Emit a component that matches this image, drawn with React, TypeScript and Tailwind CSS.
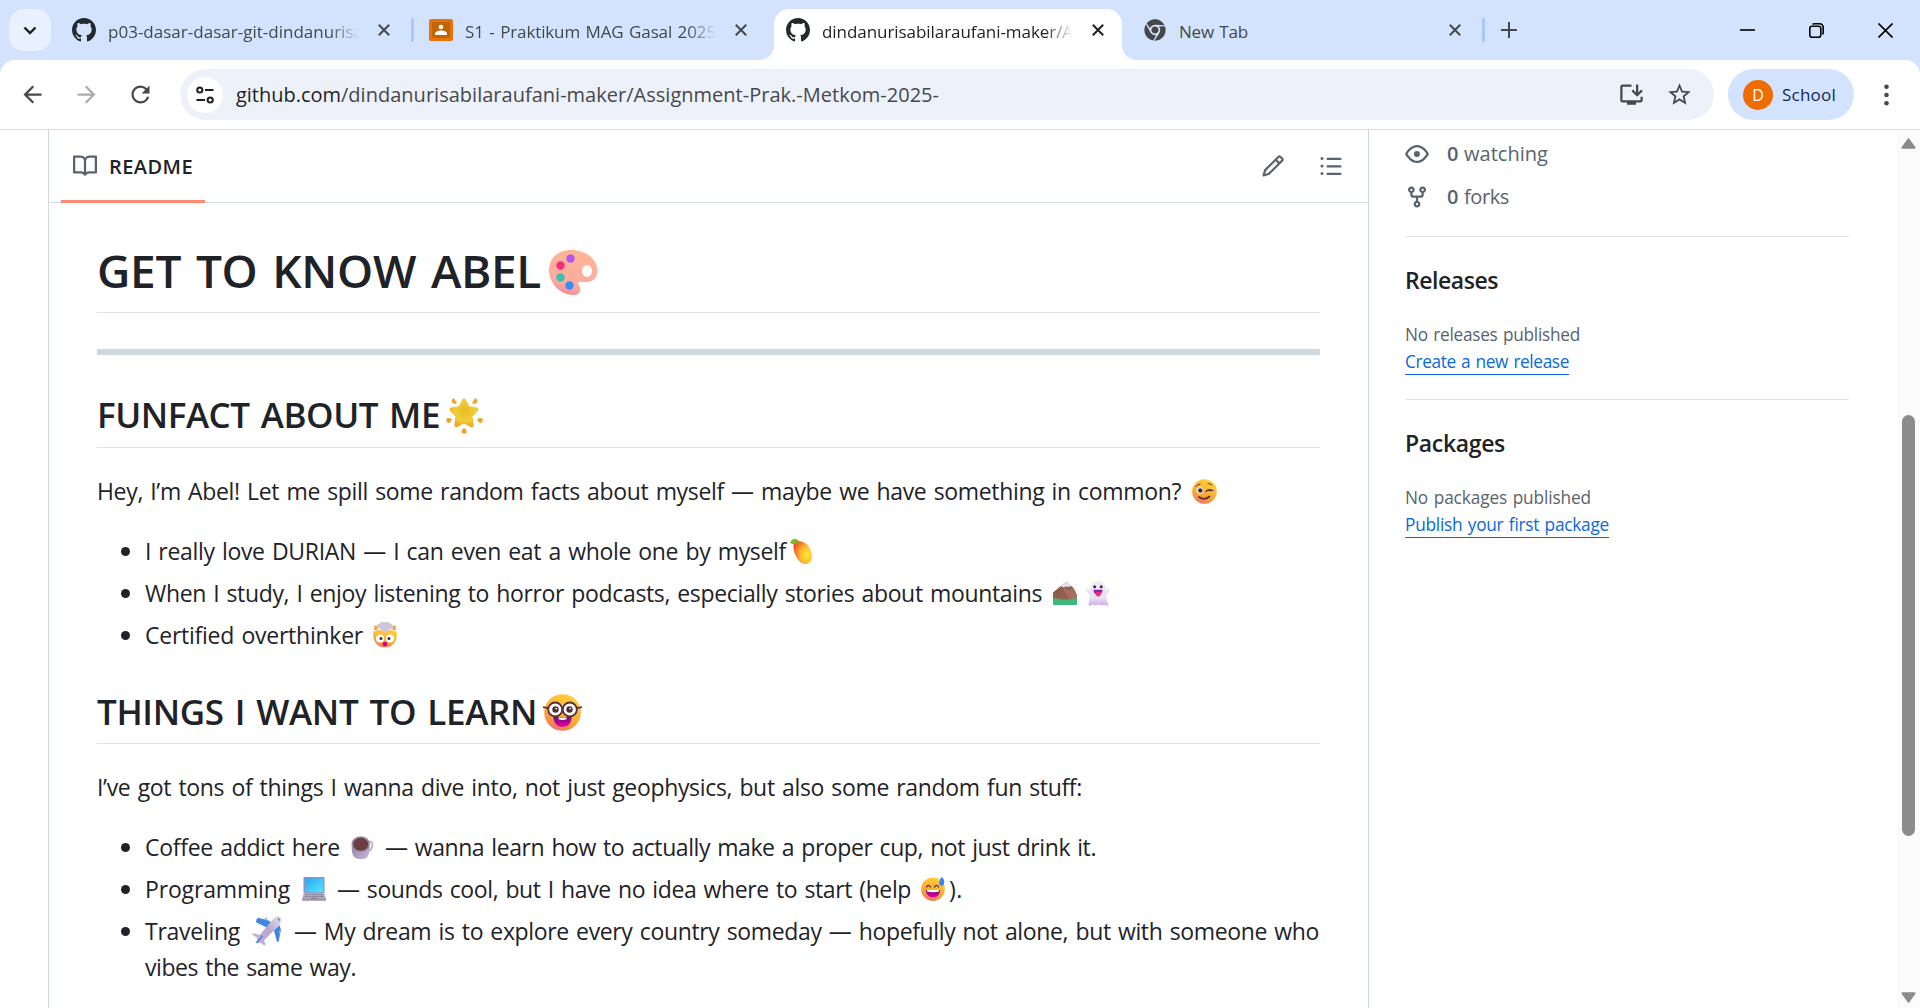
import React, { useLayoutEffect, useRef, useState } from "react";
import { FaChrome } from "react-icons/fa";
import { MdArrowBack, MdArrowForward, MdInstallDesktop, MdRefresh, MdStarBorder } from "react-icons/md";

/* One line of text whose tracking is adjusted so that it spans exactly `w` pixels. */
function Fit({ w, className = "", children }: { w: number; className?: string; children: React.ReactNode }) {
  const ref = useRef<HTMLSpanElement>(null);
  const [spacing, setSpacing] = useState(0);
  useLayoutEffect(() => {
    const el = ref.current;
    if (!el) return;
    el.style.letterSpacing = "0px";
    const n = (el.textContent || "").length;
    const s = (w - el.getBoundingClientRect().width) / n;
    el.style.letterSpacing = s + "px";
    setSpacing(s);
  }, [w]);
  return (
    <span ref={ref} className={"inline-block shrink-0 whitespace-pre [word-spacing:0.07em] " + className} style={{ letterSpacing: spacing }}>
      {children}
    </span>
  );
}

function Octicon({ d, className = "" }: { d: string; className?: string }) {
  return (
    <svg viewBox="0 0 16 16" className={"size-6 shrink-0 fill-current " + className}>
      <path fillRule="evenodd" d={d} />
    </svg>
  );
}

const MARK =
  "M8 0c4.42 0 8 3.58 8 8a8.013 8.013 0 0 1-5.45 7.59c-.4.08-.55-.17-.55-.38 0-.27.01-1.13.01-2.2 0-.75-.25-1.23-.54-1.48 1.78-.2 3.65-.88 3.65-3.95 0-.88-.31-1.59-.82-2.15.08-.2.36-1.02-.08-2.12 0 0-.67-.22-2.2.82-.64-.18-1.32-.27-2-.27-.68 0-1.36.09-2 .27-1.53-1.03-2.2-.82-2.2-.82-.44 1.1-.16 1.92-.08 2.12-.51.56-.82 1.28-.82 2.15 0 3.06 1.86 3.75 3.64 3.95-.23.2-.44.55-.51 1.07-.46.21-1.61.55-2.33-.66-.15-.24-.6-.83-1.23-.82-.67.01-.27.38.01.53.34.19.73.9.82 1.13.16.45.68 1.31 2.69.94 0 .67.01 1.3.01 1.49 0 .21-.15.45-.55.38A7.995 7.995 0 0 1 0 8c0-4.42 3.58-8 8-8Z";
const BOOK =
  "M0 1.75A.75.75 0 0 1 .75 1h4.253c1.227 0 2.317.59 3 1.501A3.743 3.743 0 0 1 11.006 1h4.245a.75.75 0 0 1 .75.75v10.5a.75.75 0 0 1-.75.75h-4.507a2.25 2.25 0 0 0-1.591.659l-.622.621a.75.75 0 0 1-1.06 0l-.622-.621A2.25 2.25 0 0 0 5.258 13H.75a.75.75 0 0 1-.75-.75Zm7.251 10.324.004-5.073-.002-2.253A2.25 2.25 0 0 0 5.003 2.5H1.5v9h3.757a3.75 3.75 0 0 1 1.994.574ZM8.755 4.75l-.004 7.322a3.752 3.752 0 0 1 1.992-.572H14.5v-9h-3.495a2.25 2.25 0 0 0-2.25 2.25Z";
const PENCIL =
  "M11.013 1.427a1.75 1.75 0 0 1 2.474 0l1.086 1.086a1.75 1.75 0 0 1 0 2.474l-8.61 8.61c-.21.21-.47.364-.756.445l-3.251.93a.75.75 0 0 1-.927-.928l.929-3.25c.081-.286.235-.547.445-.758l8.61-8.61Zm.176 4.823L9.75 4.81l-6.286 6.287a.253.253 0 0 0-.064.108l-.558 1.953 1.953-.558a.253.253 0 0 0 .108-.064Zm1.238-3.763a.25.25 0 0 0-.354 0L10.811 3.75l1.439 1.44 1.263-1.263a.25.25 0 0 0 0-.354Z";
const LIST =
  "M5.75 2.5h8.5a.75.75 0 0 1 0 1.5h-8.5a.75.75 0 0 1 0-1.5Zm0 5h8.5a.75.75 0 0 1 0 1.5h-8.5a.75.75 0 0 1 0-1.5Zm0 5h8.5a.75.75 0 0 1 0 1.5h-8.5a.75.75 0 0 1 0-1.5ZM2 14a1 1 0 1 1 0-2 1 1 0 0 1 0 2Zm1-6a1 1 0 1 1-2 0 1 1 0 0 1 2 0ZM2 4a1 1 0 1 1 0-2 1 1 0 0 1 0 2Z";
const EYE =
  "M8 2c1.981 0 3.671.992 4.933 2.078 1.27 1.091 2.187 2.345 2.637 3.023a1.62 1.62 0 0 1 0 1.798c-.45.678-1.367 1.932-2.637 3.023C11.67 13.008 9.981 14 8 14c-1.981 0-3.671-.992-4.933-2.078C1.797 10.83.88 9.576.43 8.898a1.62 1.62 0 0 1 0-1.798c.45-.677 1.367-1.931 2.637-3.022C4.33 2.992 6.019 2 8 2ZM1.679 7.932a.12.12 0 0 0 0 .136c.411.622 1.241 1.75 2.366 2.717C5.176 11.758 6.527 12.5 8 12.5c1.473 0 2.825-.742 3.955-1.715 1.124-.967 1.954-2.096 2.366-2.717a.12.12 0 0 0 0-.136c-.412-.621-1.242-1.75-2.366-2.717C10.824 4.242 9.473 3.5 8 3.5c-1.473 0-2.825.742-3.955 1.715-1.124.967-1.954 2.096-2.366 2.717ZM8 10a2 2 0 1 1-.001-3.999A2 2 0 0 1 8 10Z";
const FORK =
  "M5 5.372v.878c0 .414.336.75.75.75h4.5a.75.75 0 0 0 .75-.75v-.878a2.25 2.25 0 1 1 1.5 0v.878a2.25 2.25 0 0 1-2.25 2.25h-1.5v2.128a2.251 2.251 0 1 1-1.5 0V8.5h-1.5A2.25 2.25 0 0 1 3.5 6.25v-.878a2.25 2.25 0 1 1 1.5 0ZM5 3.25a.75.75 0 1 0-1.5 0 .75.75 0 0 0 1.5 0Zm6.75.75a.75.75 0 1 0 0-1.5.75.75 0 0 0 0 1.5Zm-3 8.75a.75.75 0 1 0-1.5 0 .75.75 0 0 0 1.5 0Z";

function Cross({ className = "" }: { className?: string }) {
  return (
    <svg viewBox="0 0 12 12" className={"size-3 shrink-0 fill-none stroke-current stroke-2 " + className}>
      <path d="M.8.8l10.4 10.4M11.2.8L.8 11.2" />
    </svg>
  );
}

/* ---------- emoji drawings ---------- */

function Gradients() {
  return (
    <svg className="absolute size-0">
      <defs>
        <linearGradient id="face" x1="0.7" y1="0" x2="0.3" y2="1">
          <stop offset="0" stopColor="#ffd03c" />
          <stop offset="0.6" stopColor="#fbab33" />
          <stop offset="0.85" stopColor="#f58a4e" />
          <stop offset="1" stopColor="#ee6a8c" />
        </linearGradient>
        <linearGradient id="mouth" x1="0" y1="0" x2="0" y2="1">
          <stop offset="0" stopColor="#6d0b8a" />
          <stop offset="0.6" stopColor="#c3008f" />
          <stop offset="1" stopColor="#e010a8" />
        </linearGradient>
        <linearGradient id="pal" x1="0.7" y1="0" x2="0.4" y2="1">
          <stop offset="0" stopColor="#ffb696" />
          <stop offset="0.8" stopColor="#fbaaa0" />
          <stop offset="1" stopColor="#f08c9c" />
        </linearGradient>
        <radialGradient id="star" cx="0.55" cy="0.4" r="0.7">
          <stop offset="0" stopColor="#e6bd20" />
          <stop offset="0.6" stopColor="#f3cd37" />
          <stop offset="1" stopColor="#e9a92a" />
        </radialGradient>
        <radialGradient id="mango" cx="0.75" cy="0.6" r="0.75">
          <stop offset="0" stopColor="#ffe83b" />
          <stop offset="0.5" stopColor="#fdb92f" />
          <stop offset="1" stopColor="#ee5a24" />
        </radialGradient>
        <linearGradient id="ghost" x1="0" y1="0" x2="0" y2="1">
          <stop offset="0" stopColor="#f1ecf5" />
          <stop offset="0.7" stopColor="#e9e0f2" />
          <stop offset="1" stopColor="#cfa8ee" />
        </linearGradient>
        <linearGradient id="screen" x1="0" y1="0" x2="1" y2="1">
          <stop offset="0" stopColor="#2aa6f0" />
          <stop offset="1" stopColor="#55e6ff" />
        </linearGradient>
        <linearGradient id="cup" x1="0" y1="0" x2="1" y2="1">
          <stop offset="0" stopColor="#8a7f9c" />
          <stop offset="1" stopColor="#cdb8e2" />
        </linearGradient>
        <linearGradient id="plane" x1="1" y1="0" x2="0" y2="1">
          <stop offset="0" stopColor="#e9e2ee" />
          <stop offset="0.5" stopColor="#b9a9c9" />
          <stop offset="1" stopColor="#c9addd" />
        </linearGradient>
        <linearGradient id="rock" x1="0" y1="0" x2="1" y2="1">
          <stop offset="0" stopColor="#86574a" />
          <stop offset="1" stopColor="#9a6654" />
        </linearGradient>
      </defs>
    </svg>
  );
}

const Palette = () => (
  <svg viewBox="0 0 49 45" className="mt-[10px] ml-2 h-[45px] w-[49px] shrink-0">
    <path
      fill="url(#pal)"
      fillRule="evenodd"
      d="M22 0C38 0 48.500 10 48.500 21c0 7-5 11-11 11-4 0-8-1-8.500 1-.3 1.500 2.500 3 2.500 6.500 0 3.500-3 5.500-7 5.500C11 45 0 33 0 20 0 8 9 0 22 0Zm16 15a5 6 0 1 0 0 12 5 6 0 0 0 0-12Z"
    />
    <circle cx="21.500" cy="8.500" r="4.200" fill="#b455f0" />
    <circle cx="11.500" cy="15.500" r="4.200" fill="#f0307f" />
    <circle cx="11.500" cy="27.500" r="4.200" fill="#3bbfae" />
    <circle cx="20.500" cy="35.500" r="4.200" fill="#3a8df2" />
  </svg>
);

const GlowStar = () => (
  <svg viewBox="0 0 37 37" className="mt-[6px] ml-1.5 size-[37px] shrink-0">
    <path
      fill="url(#star)"
      stroke="url(#star)"
      strokeWidth="4"
      strokeLinejoin="round"
      d="M18 3.500l3.800 7.400 8.700 1.500-6 6.600 1.200 9.200-7.700-3.800-7.700 3.800 1.200-9.200-6-6.600 8.700-1.500z"
    />
    <path
      fill="#eaa62c"
      d="M6 2.500c1-1.500 2.500-1 3 .3l2 3.700c-2 .8-5 .2-5-1.500zM31 2.500c-1-1.500-2.500-1-3 .3l-2 3.700c2 .8 5 .2 5-1.500zM.5 21.500c1.500-1.200 3.500-.5 5.500.7-.8 2-2.500 4.500-4 3.800C.7 25.500-.2 22.500.5 21.500zM36.500 21.500c-1.500-1.200-3.500-.5-5.500.7.8 2 2.500 4.500 4 3.800 1.300-.5 2.200-3.500 1.500-4.500zM18 31c1.500.3 3 3 2.700 4.500-.3 1.600-4.700 1.600-5.200 0C15.200 34 16.500 31.200 18 31z"
    />
  </svg>
);

const Nerd = () => (
  <svg viewBox="0 0 39 37" className="mt-[5px] ml-1.5 h-[37px] w-[39px] shrink-0">
    <circle cx="19.500" cy="18.500" r="18.300" fill="url(#face)" />
    <path d="M10.500 23h18c0 6-3.500 10-9 10s-9-4-9-10z" fill="url(#mouth)" />
    <path d="M15.500 23.500h8v1.800q-4 1.500-8 0z" fill="#fff" />
    <g fill="#fff" stroke="#55303c" strokeWidth="1.800">
      <circle cx="12.200" cy="15.500" r="7" />
      <circle cx="26.800" cy="15.500" r="7" />
      <path d="M18.500 14.500q1-1 2 0M0 13.200l5.200.9M39 13.200l-5.200.9" />
    </g>
    <circle cx="12.500" cy="15.500" r="3.200" fill="#48303a" />
    <circle cx="26.500" cy="15.500" r="3.200" fill="#48303a" />
    <circle cx="13.200" cy="14.600" r=".9" fill="#fff" />
    <circle cx="27.200" cy="14.600" r=".9" fill="#fff" />
  </svg>
);

const Wink = () => (
  <svg viewBox="0 0 25 25" className="ml-[11px] size-[25px] shrink-0">
    <circle cx="12.500" cy="12.500" r="12.300" fill="url(#face)" />
    <circle cx="8" cy="11.500" r="3.300" fill="#fff" />
    <circle cx="8.300" cy="11.500" r="2.300" fill="#40283a" />
    <g fill="none" stroke="#5b2f33" strokeWidth="1.300" strokeLinecap="round">
      <path d="M4 7.500Q5.500 5 8 5M16 4.500q2.500-.3 4 1.500" strokeWidth="1" />
      <path d="M14 12.500q2.500-3 6-1.200l-3 .2" />
      <path d="M7 18q5.500 4 10.500-.5" strokeWidth="1.800" />
    </g>
  </svg>
);

const Mango = () => (
  <svg viewBox="0 0 22 25" className="ml-1 h-[25px] w-[22px] shrink-0">
    <path fill="url(#mango)" d="M3.500 5C6 1.500 11 1.500 15 4c4.500 3 7 9 6.800 14.500-.2 4-3 6.500-7 6.500C9 25 2.500 14 3.500 5Z" />
    <path fill="#84b52a" d="M0 3.500C2-.5 6-.8 9 1.800 8 4.500 2.500 6.500 0 3.500Z" />
  </svg>
);

const Mountain = () => (
  <svg viewBox="0 0 24 23" className="ml-[11px] h-[23px] w-6 shrink-0">
    <path fill="url(#rock)" d="M0 10.500L8.500 3.500 12 .8q1.500-1 3 .2L20 5.500q2.500 3.500 4 7.500V18H0Z" />
    <path fill="#b57c68" d="M9 4.500l4 1.500 3.500 3L20 5.500q2.500 3.500 4 7.500v3l-7 1.500-4.500-6z" opacity=".55" />
    <path fill="#e4dfea" d="M7.500 4.300L11.800.8c1-.8 2.300-.8 3.200 0l3.500 3.300-3 .9-2.500-.6-2.500.8z" />
    <path fill="#3eb87a" d="M0 16q4 .3 8 1.200t9 0q3.500-.8 7-1V22q0 1-1 1H1q-1 0-1-1z" />
  </svg>
);

const Ghost = () => (
  <svg viewBox="0 0 24 25" className="ml-[9px] h-[25px] w-6 shrink-0">
    <path
      fill="url(#ghost)"
      d="M12 0c5 0 7.500 3.500 8 8.500l2.500-.8c1.500-.3 2 1.300.8 2.800L20.500 14c0 4 1 7 1.500 9.500.2 1.300-1.500 1.500-2.500.6l-1.500-.4-2 .9-3.300-1.100-3.400 1.100L7 23.500l-2 1c-1.200.5-2.700 0-2.400-1.500C3.200 20 3.500 17 3.500 14L.6 10.500C-.4 9 .1 7.400 1.500 7.800L4 8.500C4.500 3.500 7 0 12 0Z"
    />
    <circle cx="8.700" cy="5.800" r="1.500" fill="#3b2b45" />
    <circle cx="15.200" cy="5.800" r="1.500" fill="#3b2b45" />
    <path d="M7.500 8.800h9c0 3-1.500 5-4.500 5s-4.500-2-4.500-5z" fill="#8b1fae" />
    <path d="M9.500 11h5.500c0 3-1 4.600-2.700 4.600S9.500 14 9.500 11z" fill="#f0287f" />
  </svg>
);

const Exploding = () => (
  <svg viewBox="0 0 24 26" className="ml-[10px] h-[26px] w-6 shrink-0">
    <path d="M.5 9.500Q12 5 23.500 9.500c1.500 9-3 16-11.500 16S-1 18.500.5 9.500Z" fill="url(#face)" />
    <path d="M1.500 3.500l3 .5v4L1 8zM22.500 3.500l-3 .5v4L23 8z" fill="#e8a93c" />
    <path
      fill="#cfc6da"
      d="M8 0c1.500-.8 3-.5 4 .3 2-.9 5-.3 5.500 1.500 2.500.3 3.300 3.300 1.500 4.700-1 .8-2.500.6-3.500 0l.8 3.300q-4.500 1.600-8.600 0L8.500 6.500C6.500 7.500 3.500 6.500 4 4 4.300 2 5.500 1.500 7 1.500z"
    />
    <circle cx="7" cy="16.500" r="4" fill="#fff" />
    <circle cx="17" cy="16.500" r="4" fill="#fff" />
    <circle cx="8" cy="16.500" r="1.500" fill="#40283a" />
    <circle cx="16" cy="16.500" r="1.500" fill="#40283a" />
    <ellipse cx="12" cy="22" rx="2.300" ry="2.300" fill="#c3008f" />
  </svg>
);

const Coffee = () => (
  <svg viewBox="0 0 22 23" className="ml-[11px] h-[23px] w-[22px] shrink-0">
    <path d="M17 6.500c3-2 5 0 4.300 3.500-.6 3-2.500 5-5.300 5.500" fill="none" stroke="#b5a6c6" strokeWidth="1.600" />
    <path d="M1 8h17.500c.5 5-.5 11-2.500 13.500-2.500 2-9.500 2-12.500 0C.8 18.500.3 13 1 8Z" fill="url(#cup)" />
    <ellipse cx="9.700" cy="8" rx="9.300" ry="7.800" fill="#9a8fab" />
    <ellipse cx="9.700" cy="8.300" rx="7.600" ry="6.500" fill="#6b3f3f" />
  </svg>
);

const Laptop = () => (
  <svg viewBox="0 0 24 24" className="ml-3 size-6 shrink-0">
    <rect x="1.500" width="21" height="16.500" rx="1" fill="#9a8fb8" />
    <rect x="2.800" y="1.300" width="18.400" height="14" fill="url(#screen)" />
    <path d="M2 16h20l2 6H0z" fill="#b3a8c0" />
    <path d="M3.500 17h17l.8 3H2.700z" fill="#877d93" />
    <path d="M3 18.500h18M6 17v3M9 17v3M12 17v3M15 17v3M18 17v3" stroke="#c7bfd2" strokeWidth=".6" />
    <rect y="21.500" width="24" height="2.200" rx=".8" fill="#9f93ae" />
    <rect x="9" y="20.700" width="6" height="1.200" fill="#8b8098" />
  </svg>
);

const Sweat = () => (
  <svg viewBox="0 0 24 24" className="ml-[10px] size-6 shrink-0">
    <circle cx="12" cy="12.200" r="11.800" fill="url(#face)" />
    <path d="M5 13h14c0 4.500-2.800 7.500-7 7.500S5 17.500 5 13z" fill="url(#mouth)" />
    <path d="M6 13h12v1.500q-6 1.600-12 0z" fill="#fff" />
    <g fill="none" stroke="#5b2f33" strokeWidth="1.300" strokeLinecap="round">
      <path d="M5.500 10q1.900-3.400 4 0M13.500 10q2-3.400 4 0" />
    </g>
    <path d="M20.500 0c2 1 3 3.500 2.700 6-.2 1.700-1.400 2.800-2.700 2.700-1.500 0-2.500-1.200-2.300-3C18.400 3.500 19.500 1.500 20.500 0Z" fill="#3f7ff0" />
  </svg>
);

const Plane = () => (
  <svg viewBox="0 0 30 30" className="ml-3 size-[30px] shrink-0">
    <path d="M4.500 3.500L6 1.800l10.500 2.700 4.500 3-5.500 4.500L4 6.200zM27.500 9L22 14.500l3 11.500 1.800-.8 1.500-9.200.7-2z" fill="#3f86e0" />
    <path d="M13.500 1.500l2 .5-1 2.500-2-.5zM27.500 14.500l1.500 1-.8 2-1.500-.6z" fill="#9bb0e6" />
    <path d="M25 .3c3-.8 5.300 1.500 4.500 4.500-.6 2-2 3.800-4 6L10.500 26c-1.500 1.500-4 1-5-.3-1-1.300-1-3.200.3-4.500L19.500 5C21.500 2.800 23 .9 25 .3Z" fill="url(#plane)" />
    <path d="M0 18.500l1.500-1.200 7 1.700-3 3zM11 22.500l2.500 5.500-1.200 1.700L8 26z" fill="#c3acd6" />
    <path d="M10 19l1.300 1.300-6 7.200-1.800-.8z" fill="#4a8fe8" />
    <path d="M25.500 2l2 .5.6 2.500-1.600-.6z" fill="#2f9fd0" />
  </svg>
);

/* ---------- browser chrome ---------- */

function Separator() {
  return <div className="h-6 w-[3px] shrink-0 rounded-full bg-[#a8c7fa]" />;
}

function TabTitle({ w, children, className = "" }: { w: number; children: string; className?: string }) {
  return (
    <div className={"w-[251px] shrink-0 overflow-hidden [mask-image:linear-gradient(to_right,#000_222px,transparent_251px)] " + className}>
      <Fit w={w}>{children}</Fit>
    </div>
  );
}

function TabStrip() {
  return (
    <div className="flex h-[60px] shrink-0 items-center text-[17px] leading-[26px] text-[#45474a]">
      <div className="ml-[9px] flex size-[42px] shrink-0 items-center justify-center rounded-[15px] bg-[#e9f0fe]">
        <svg viewBox="0 0 14 9" className="h-[9px] w-3.5 fill-none stroke-[#1f1f1f] stroke-[2.4]">
          <path d="M1.500 1.500L7 7l5.500-5.500" />
        </svg>
      </div>
      <div className="ml-[21px] flex w-[339px] shrink-0 items-center">
        <Octicon d={MARK} className="text-[#24292f]" />
        <TabTitle w={255} className="ml-3 mt-1">p03-dasar-dasar-git-dindanurisa</TabTitle>
        <Cross className="ml-[19px]" />
      </div>
      <div className="flex w-[18px] shrink-0">
        <Separator />
      </div>
      <div className="flex w-[345px] shrink-0 items-center">
        <svg viewBox="0 0 24 22" className="h-[22px] w-6 shrink-0">
          <rect width="24" height="22" rx="2" fill="#e8710a" />
          <rect x="3" y="3" width="18" height="16" fill="#c26401" />
          <circle cx="12" cy="8" r="2.300" fill="#fff" />
          <path d="M6 16v-1.500c0-2 3.500-3 6-3s6 1 6 3V16z" fill="#fff" />
        </svg>
        <TabTitle w={251} className="ml-3 mt-1">S1 - Praktikum MAG Gasal 2025</TabTitle>
        <Cross className="ml-[19px]" />
      </div>
      <div className="relative mt-[9px] flex h-[51px] w-[348px] shrink-0 items-center rounded-t-[15px] bg-white pb-[9px] pl-3 text-[#1f1f1f]">
        <div className="absolute bottom-0 -left-[15px] size-[15px] bg-[radial-gradient(circle_at_0_0,#d3e3fd_14.500px,#fff_15.500px)]" />
        <div className="absolute -right-[15px] bottom-0 size-[15px] bg-[radial-gradient(circle_at_100%_0,#d3e3fd_14.500px,#fff_15.500px)]" />
        <Octicon d={MARK} className="text-[#24292f]" />
        <TabTitle w={251} className="ml-3 mt-1">dindanurisabilaraufani-maker/A</TabTitle>
        <Cross className="ml-[19px]" />
      </div>
      <div className="ml-[22px] flex w-[338px] shrink-0 items-center">
        <FaChrome className="size-[22px] shrink-0" />
        <Fit w={69} className="mt-1 ml-[13px]">New Tab</Fit>
        <Cross className="ml-[201px]" />
      </div>
      <Separator />
      <svg viewBox="0 0 16 16" className="ml-4 size-4 shrink-0 fill-none stroke-current stroke-2">
        <path d="M8 0v16M0 8h16" />
      </svg>
      <div className="ml-auto flex items-center gap-[54px] pr-[27px] text-black">
        <svg viewBox="0 0 15 15" className="size-[15px] fill-none stroke-current stroke-[1.600]">
          <path d="M0 7h15" />
        </svg>
        <svg viewBox="0 0 15 15" className="size-[15px] fill-none stroke-current stroke-[1.600]">
          <rect x=".8" y="3.300" width="11" height="11" rx="2.200" />
          <path d="M3.500 1.200Q4.300.8 5.500.8h5.200a3.500 3.500 0 0 1 3.500 3.500v5q0 1.200-.5 2.200" />
        </svg>
        <svg viewBox="0 0 15 15" className="size-[15px] fill-none stroke-current stroke-[1.600]">
          <path d="M.5.5l14 14M14.500.5l-14 14" />
        </svg>
      </div>
    </div>
  );
}

function Toolbar() {
  return (
    <div className="flex h-[70px] shrink-0 items-center rounded-t-[15px] border-b border-[#dddfe1] bg-white text-[#47484a]">
      <MdArrowBack className="ml-[19px] size-[27px] shrink-0" />
      <MdArrowForward className="ml-[27px] size-[27px] shrink-0 text-[#aaacae]" />
      <MdRefresh className="ml-[27px] size-[27px] shrink-0" />
      <div className="ml-[26px] flex h-[51px] w-[1534px] shrink-0 items-center rounded-full bg-[#edf1fa] pl-[7px]">
        <div className="flex size-9 shrink-0 items-center justify-center rounded-full bg-white">
          <svg viewBox="0 0 18 18" className="size-[18px] fill-none stroke-[#1f1f1f] stroke-2">
            <circle cx="3.800" cy="4" r="2.600" />
            <circle cx="14.200" cy="14" r="2.600" />
            <path d="M9 4h8.500M.5 14H9" />
          </svg>
        </div>
        <div className="ml-[13px] flex text-[20px] leading-7">
          <Fit w={105} className="text-[#1f1f1f]">github.com</Fit>
          <Fit w={598}>/dindanurisabilaraufani-maker/Assignment-Prak.-Metkom-2025-</Fit>
        </div>
        <div className="ml-auto flex items-center gap-[21px] pr-[21px]">
          <MdInstallDesktop className="size-[27px]" />
          <MdStarBorder className="size-[27px]" />
        </div>
      </div>
      <div className="ml-3.5 flex h-[51px] w-[126px] shrink-0 items-center rounded-full bg-[#d3e3fd] pl-[15px] text-[17px] text-[#0a2a5c]">
        <div className="flex size-[30px] shrink-0 items-center justify-center rounded-full bg-[#ef6c00] text-[16px] text-white">D</div>
        <Fit w={54} className="ml-[9px]">School</Fit>
      </div>
      <svg viewBox="0 0 5 22" className="ml-[30px] h-[22px] w-[5px] fill-current">
        <circle cx="2.500" cy="2.700" r="2.300" />
        <circle cx="2.500" cy="11" r="2.300" />
        <circle cx="2.500" cy="19.300" r="2.300" />
      </svg>
    </div>
  );
}

/* ---------- README ---------- */

function Item({ children, extra }: { children: React.ReactNode; extra?: React.ReactNode }) {
  return (
    <li className="relative pl-12">
      <span className="absolute top-[14px] left-6 size-[9px] rounded-full bg-[#1f2328]" />
      <div className="flex h-9 items-center">{children}</div>
      {extra}
    </li>
  );
}

function Readme() {
  return (
    <section className="flex w-[1321px] shrink-0 flex-col border-x border-[#d1d9e0]">
      <div className="flex h-[73px] shrink-0 items-center border-b border-[#d1d9e0] pr-[25px] text-[#59636e]">
        <div className="relative ml-3 flex h-full w-36 items-center pl-3">
          <Octicon d={BOOK} />
          <Fit w={84} className="mt-0.5 ml-3 text-[20px] font-semibold text-[#1f2328]">README</Fit>
          <div className="absolute -bottom-px left-0 h-[3px] w-full bg-[#fd8c73]" />
        </div>
        <Octicon d={PENCIL} className="ml-auto" />
        <Octicon d={LIST} className="ml-[34px]" />
      </div>
      <div className="px-12 pt-[37px] text-[23px] leading-9 text-[#1f2328]">
        <h1 className="flex h-[73px] border-b border-[#d1d9e0]/70 text-[46px] leading-[60px] font-semibold">
          <Fit w={444}>GET TO KNOW ABEL</Fit>
          <Palette />
        </h1>
        <div className="mt-9 h-1.5 bg-[#d1d9e0]" />
        <h2 className="mt-9 flex h-[57px] border-b border-[#d1d9e0]/70 text-[35px] leading-[47px] font-semibold">
          <Fit w={343}>FUNFACT ABOUT ME</Fit>
          <GlowStar />
        </h2>
        <p className="mt-[25px] flex items-center">
          <Fit w={1084}>Hey, I’m Abel! Let me spill some random facts about myself — maybe we have something in common?</Fit>
          <Wink />
        </p>
        <ul className="mt-6 flex flex-col gap-1.5">
          <Item>
            <Fit w={641}>I really love DURIAN — I can even eat a whole one by myself</Fit>
            <Mango />
          </Item>
          <Item>
            <Fit w={897}>When I study, I enjoy listening to horror podcasts, especially stories about mountains</Fit>
            <Mountain />
            <Ghost />
          </Item>
          <Item>
            <Fit w={218}>Certified overthinker</Fit>
            <Exploding />
          </Item>
        </ul>
        <h2 className="mt-9 flex h-[55px] border-b border-[#d1d9e0]/70 text-[35px] leading-[45px] font-semibold">
          <Fit w={440}>THINGS I WANT TO LEARN</Fit>
          <Nerd />
        </h2>
        <p className="mt-[25px]">
          <Fit w={985}>I’ve got tons of things I wanna dive into, not just geophysics, but also some random fun stuff:</Fit>
        </p>
        <ul className="mt-6 flex flex-col gap-1.5">
          <Item>
            <Fit w={195}>Coffee addict here</Fit>
            <Coffee />
            <Fit w={711} className="ml-3">— wanna learn how to actually make a proper cup, not just drink it.</Fit>
          </Item>
          <Item>
            <Fit w={145}>Programming</Fit>
            <Laptop />
            <Fit w={574} className="ml-[11px]">— sounds cool, but I have no idea where to start (help</Fit>
            <Sweat />
            <Fit w={14} className="ml-1">).</Fit>
          </Item>
          <Item extra={<Fit w={211}>vibes the same way.</Fit>}>
            <Fit w={95}>Traveling</Fit>
            <Plane />
            <Fit w={1025} className="ml-3">— My dream is to explore every country someday — hopefully not alone, but with someone who</Fit>
          </Item>
        </ul>
      </div>
    </section>
  );
}

function Block({ title, tw, note, nw, link, lw }: { title: string; tw: number; note: string; nw: number; link: string; lw: number }) {
  return (
    <div className="flex h-[163px] flex-col items-start border-t border-[#d1d9e0]/70">
      <Fit w={tw} className="mt-[25px] text-[23px] leading-9 font-semibold text-[#1f2328]">{title}</Fit>
      <Fit w={nw} className="mt-[23px] text-[17.250px] leading-[27px] text-[#59636e]">{note}</Fit>
      <a className="flex h-[27px] border-b border-current text-[17.250px] leading-[27px] text-[#0969da]">
        <Fit w={lw}>{link}</Fit>
      </a>
    </div>
  );
}

function Sidebar() {
  return (
    <aside className="ml-9 w-[444px] shrink-0 text-[20px] leading-[30px] text-[#59636e]">
      <div className="mt-[9px] flex items-center">
        <Octicon d={EYE} />
        <Fit w={11} className="ml-[18px] font-semibold">0</Fit>
        <Fit w={84} className="ml-[6px]">watching</Fit>
      </div>
      <div className="mt-[13px] mb-[24px] flex items-center">
        <Octicon d={FORK} />
        <Fit w={11} className="ml-[18px] font-semibold">0</Fit>
        <Fit w={45} className="ml-[6px]">forks</Fit>
      </div>
      <Block title="Releases" tw={93} note="No releases published" nw={175} link="Create a new release" lw={164} />
      <Block title="Packages" tw={100} note="No packages published" nw={186} link="Publish your first package" lw={204} />
    </aside>
  );
}

function Scrollbar() {
  return (
    <div className="ml-auto flex w-[23px] flex-col items-center bg-[#fbfbfb] text-[#8b8b8b]">
      <svg viewBox="0 0 15 11" className="mt-2 h-[11px] w-[15px] shrink-0 fill-current stroke-current stroke-2 [stroke-linejoin:round]">
        <path d="M1.500 9.700L7.500 1.300l6 8.400z" />
      </svg>
      <div className="mt-[266px] h-[421px] w-[13px] shrink-0 rounded-full bg-current" />
      <svg viewBox="0 0 15 11" className="mt-auto mb-[5px] h-[11px] w-[15px] shrink-0 fill-current stroke-current stroke-2 [stroke-linejoin:round]">
        <path d="M1.500 1.300l6 8.400 6-8.400z" />
      </svg>
    </div>
  );
}

export default function App() {
  return (
    <div className="flex h-[1008px] w-[1920px] flex-col overflow-hidden bg-[#d3e3fd] font-['Open_Sans','Noto_Sans',sans-serif]">
      <Gradients />
      <TabStrip />
      <Toolbar />
      <main className="flex min-h-0 grow bg-white pl-12">
        <Readme />
        <Sidebar />
        <Scrollbar />
      </main>
    </div>
  );
}
